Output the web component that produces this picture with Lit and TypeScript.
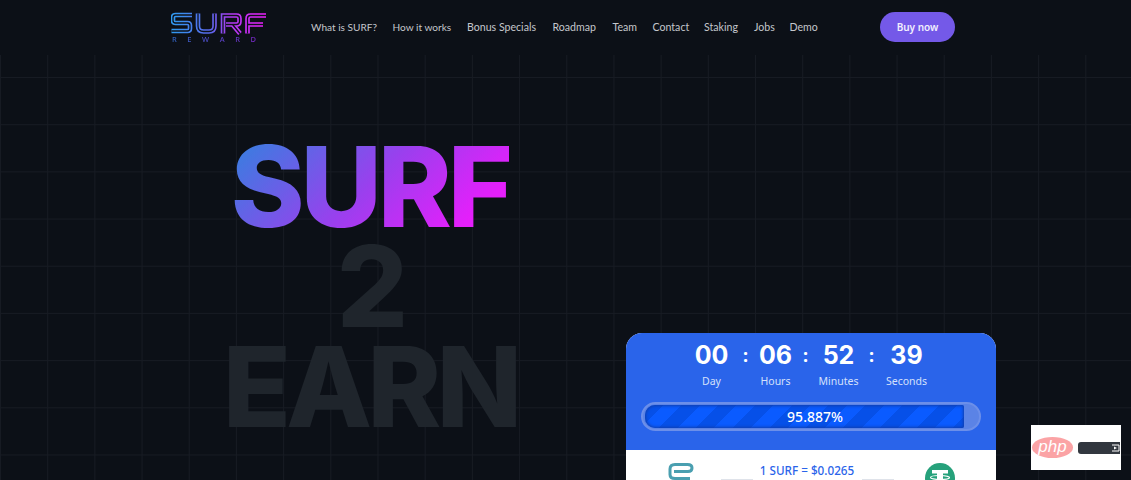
import { LitElement, html, css, svg } from "lit";
import { customElement } from "lit/decorators.js";

const NAV = [
  { t: "What is SURF?", w: 66 },
  { t: "How it works", w: 59 },
  { t: "Bonus Specials", w: 70 },
  { t: "Roadmap", w: 44.5 },
  { t: "Team", w: 24.5 },
  { t: "Contact", w: 36 },
  { t: "Staking", w: 34.5 },
  { t: "Jobs", w: 20 },
  { t: "Demo", w: 27 },
];
const COUNT = [
  { v: "00", l: "Day", w: 54 },
  { v: "06", l: "Hours", w: 46 },
  { v: "52", l: "Minutes", w: 52 },
  { v: "39", l: "Seconds", w: 56 },
];
const LETTERS = [
  "M192 13.500 H175.500 Q173 13.500 173 16 V19 Q173 21.500 175.500 21.500 H187.500 Q190 21.500 190 24 V27 Q190 29.500 187.500 29.500 H171.500",
  "M198 12 V24.500 Q198 30 203.500 30 H209 Q214.500 30 214.500 24.500 V12",
  "M223 32 V14 H236.500 Q239.500 14 239.500 17 V20 Q239.500 23 236.500 23 H226 M232.500 23 L240 32",
  "M247.500 32 V17 Q247.500 14 250.500 14 H266 M247.500 23 H263",
];

@customElement("app-root")
export class AppRoot extends LitElement {
  static styles = css`
    :host { display: block; height: 480px; overflow: hidden; background: #0c1017; font-family: "Noto Sans", sans-serif; }
    .header { height: 55px; display: flex; align-items: flex-start; padding: 12px 176px 0 171px; box-sizing: border-box; }
    .logo { width: 95px; height: 33px; display: flex; flex-direction: column; }
    .logo svg { display: block; width: 96px; height: 23px; }
    .reward {
      display: flex; justify-content: space-between; width: 84px; padding-left: 1px;
      margin-top: 0; font: 500 7.500px/9px "Noto Sans", sans-serif;
      background: linear-gradient(90deg, #2f68c8, #7a28c8); -webkit-background-clip: text; background-clip: text; color: transparent;
    }
    nav { display: flex; gap: 15.5px; margin-left: 45px; padding-top: 8px; flex: 1; }
    nav a { color: #c4c7cc; font: 400 10.100px/14px Lato, sans-serif; white-space: nowrap; flex: none; }
    nav a.wide { font-size: 10.600px; }
    .buy {
      width: 75px; height: 30px; border-radius: 15px; background: #7459e8; color: #f1eefe;
      display: flex; align-items: center; justify-content: center; font-size: 10px; font-weight: 600;
    }
    .hero {
      height: 425px; display: flex; padding-left: 171px; gap: 57px;
      background-image: linear-gradient(#171b23 1px, transparent 1px), linear-gradient(90deg, #171b23 1px, transparent 1px);
      background-size: 47.2px 47.2px; background-position: 0 22px, 0 0;
    }
    h1 {
      width: 398px; margin: 81px 0 0; font: 800 112px/100px Inter, sans-serif; text-align: center; letter-spacing: -5px;
      color: #1f252c; flex: none;
    }
    h1 span { display: block; height: 100px; }
    h1 .grad {
      width: max-content; margin: 0 auto; letter-spacing: -4.200px;
      background: linear-gradient(135deg, #3a7de0 5%, #9b3fee 50%, #e51ffb 85%);
      -webkit-background-clip: text; background-clip: text; color: transparent;
    }
    .card { width: 370px; height: 200px; margin-top: 278px; border-radius: 16px 16px 0 0; overflow: hidden; background: #fff; flex: none; }
    .blue { height: 117px; background: #2a64ea; padding: 7px 15px 0; box-sizing: border-box; }
    .count { display: flex; justify-content: center; gap: 4px; padding-right: 3px; }
    .cell { display: flex; flex-direction: column; align-items: center; }
    .num { font: 700 25px/30px Inter, sans-serif; color: #fff; }
    .lab { margin-top: 4px; font-size: 10.500px; line-height: 15px; color: #d5e0fb; white-space: nowrap; }
    .sep { font: 700 18px/30px "Noto Sans", sans-serif; color: #fff; width: 6px; text-align: center; }
    .progress {
      position: relative; height: 29px; margin-top: 13px; border-radius: 15px; box-sizing: border-box;
      background: #5b83e6; border: 2px solid #6c8fe9; padding: 1px 15px 1px 2px; display: flex;
    }
    .fill {
      flex: 1; border-radius: 10px 2px 2px 10px;
      background: repeating-linear-gradient(135deg, #0650e8 0 13px, #0a5bff 13px 26px);
      box-shadow: inset 0 0 3px 1px #0f3fb0;
    }
    .pct { position: absolute; inset: 0; padding-left: 8px; display: flex; align-items: center; justify-content: center; font-size: 14px; font-weight: 500; color: #fff; }
    .white { display: flex; align-items: flex-start; padding: 13px 41px 0 42px; }
    .token { width: 26px; height: 30px; flex: none; }
    .price { flex: 1; display: flex; flex-direction: column; align-items: center; color: #2a64ea; font-size: 11.700px; font-weight: 500; line-height: 15px; padding-right: 5px; }
    .rules { display: flex; width: 173px; justify-content: space-between; margin-top: 1px; }
    .rules i { width: 32px; height: 1px; background: #dfe3ea; }
    .tether { width: 30px; height: 30px; flex: none; }
    .wm {
      position: absolute; left: 1031px; top: 425px; width: 90px; height: 45px; background: #fff;
      display: flex; align-items: center; padding-left: 1px; box-sizing: border-box; gap: 5px;
    }
    .oval { width: 41px; height: 21px; border-radius: 50%; background: #fba3a5; color: #fff; font: italic 400 17px/19px "Liberation Sans", sans-serif; text-align: center; }
    .bar { width: 42px; height: 12px; background: #32373f; border-radius: 3px 0 0 3px; display: flex; justify-content: flex-end; }
    .bar svg { width: 9px; height: 12px; display: block; }
  `;

  render() {
    return html`
      <div class="header">
        <div class="logo">
          <svg viewBox="171 10.500 96 23" fill="none">
            <defs>
              <linearGradient id="lg" gradientUnits="userSpaceOnUse" x1="171" y1="0" x2="266" y2="0">
                <stop offset="0" stop-color="#2f9bf0" /><stop offset=".42" stop-color="#5a66ea" />
                <stop offset=".62" stop-color="#b03cf4" /><stop offset="1" stop-color="#ee1fff" />
              </linearGradient>
            </defs>
            ${LETTERS.map((d) => svg`<path d=${d} stroke="url(#lg)" stroke-width="4.600" />
              <path d=${d} stroke="#0c1017" stroke-width="1.300" />`)}
          </svg>
          <div class="reward"><span>R</span><span>E</span><span>W</span><span>A</span><span>R</span><span>D</span></div>
        </div>
        <nav>${NAV.map((n, i) => html`<a class=${i > 1 ? "wide" : ""} style="width:${n.w}px">${n.t}</a>`)}</nav>
        <div class="buy">Buy now</div>
      </div>
      <div class="hero">
        <h1><span class="grad">SURF</span><span>2</span><span>EARN</span></h1>
        <div class="card">
          <div class="blue">
            <div class="count">
              ${COUNT.map((c, i) => html`
                ${i ? html`<div class="sep">:</div>` : ""}
                <div class="cell" style="width:${c.w}px"><div class="num">${c.v}</div><div class="lab">${c.l}</div></div>
              `)}
            </div>
            <div class="progress"><div class="fill"></div><div class="pct">95.887%</div></div>
          </div>
          <div class="white">
            <svg class="token" viewBox="0 0 26 30" fill="none">
              <path d="M22 15.500 H7 Q2 15.500 2 11.500 V6 Q2 1.500 7 1.500 H19.500 Q24 1.500 24 5 Q24 8.500 20 8.500 H6" stroke="#4a9fb0" stroke-width="3" />
            </svg>
            <div class="price">
              <div>1 SURF = $0.0265</div>
              <div class="rules"><i></i><i></i></div>
            </div>
            <svg class="tether" viewBox="0 0 30 30">
              <circle cx="15" cy="15" r="15" fill="#26a17b" />
              <path d="M7 7 H23 V10.500 H18 V24 H12 V10.500 H7 Z" fill="#fff" />
              <ellipse cx="15" cy="14.500" rx="9.500" ry="2" fill="none" stroke="#fff" stroke-width="1.200" />
            </svg>
          </div>
        </div>
      </div>
      <div class="wm">
        <div class="oval">php</div>
        <div class="bar">
          <svg viewBox="0 0 9 12">
            <path d="M1 3 H8 V9 H1" fill="none" stroke="#fff" stroke-width="1" />
            <path d="M3 4.500 L6 6 L3 7.500 Z" fill="#fff" />
          </svg>
        </div>
      </div>
    `;
  }
}
